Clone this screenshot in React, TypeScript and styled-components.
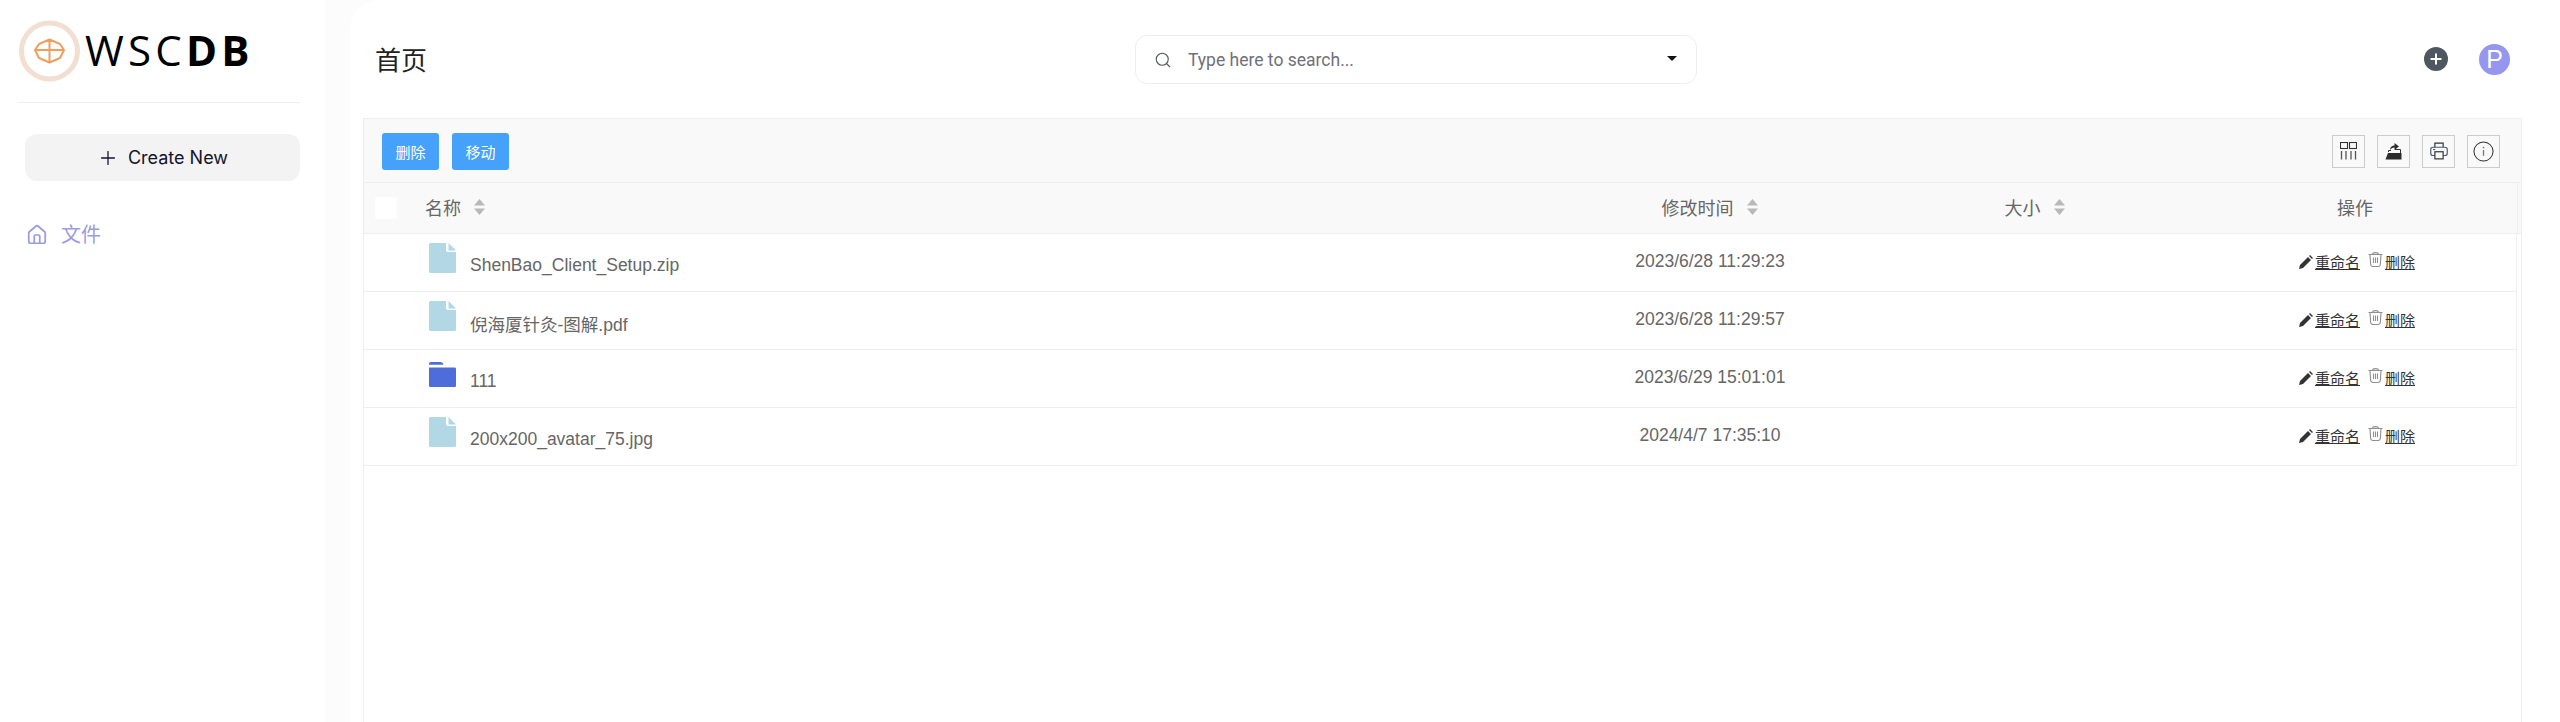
import React from 'react';
import styled, { createGlobalStyle } from 'styled-components';
import { Home, Plus, Search } from 'lucide-react';

const SIDEBAR_WIDTH = 325;
const ROW_COLUMNS = '50px 1129px 334px 316px 1fr';
const CJK_STACK = '"Liberation Sans", "Noto Sans CJK SC", sans-serif';

const GlobalStyle = createGlobalStyle`
    html, body {
        margin: 0;
        height: 100%;
        overflow: hidden;
        background: #fff;
        font-family: ${CJK_STACK};
    }
    * {
        box-sizing: border-box;
    }
`;

const Shell = styled.div`
    display: grid;
    grid-template-columns: ${SIDEBAR_WIDTH}px 1fr;
    height: 722px;
    overflow: hidden;
    background: #fcfcfc;
`;

const Sidebar = styled.aside`
    background: #fff;
    padding: 0 25px;
`;

const LogoRow = styled.div`
    display: flex;
    align-items: center;
    height: 103px;
    margin-left: -7px;
    padding-bottom: 1px;
    border-bottom: 1px solid #eeeeee;
    gap: 3px;
`;

const LogoText = styled.div`
    font-family: "Open Sans", sans-serif;
    font-size: 42px;
    line-height: 1;
    letter-spacing: 4.2px;
    color: #000;
    margin-top: -1px;

    b {
        font-weight: 700;
    }
`;

const CreateButton = styled.button`
    display: flex;
    align-items: center;
    justify-content: center;
    gap: 9px;
    width: 100%;
    height: 47px;
    margin-top: 31px;
    border: 0;
    border-radius: 12px;
    background: #f3f3f3;
    color: #14142b;
    font-family: Inter, sans-serif;
    font-size: 18px;
`;

const NavItem = styled.div`
    display: flex;
    align-items: center;
    gap: 13px;
    margin-top: 39px;
    padding-left: 1px;
    color: #9b9be2;
    font-size: 20px;
    line-height: 30px;
`;

const Main = styled.main`
    display: flex;
    flex-direction: column;
    min-width: 0;
    margin-left: 25px;
    padding: 0 38px 0 13px;
    background: #fff;
    border-top-left-radius: 30px;
`;

const TopBar = styled.header`
    display: grid;
    grid-template-columns: 760px 562px 1fr;
    align-items: center;
    height: 118px;
    padding: 0 12px;
`;

const PageTitle = styled.h1`
    margin: 4px 0 0;
    font-size: 26px;
    font-weight: 400;
    line-height: 36px;
    color: #222;
`;

const SearchBox = styled.div`
    display: flex;
    align-items: center;
    height: 49px;
    margin-top: 1px;
    padding: 0 19px 0 18px;
    border: 1px solid #eeeeee;
    border-radius: 12px;
    color: #70707a;
    font-family: Roboto, sans-serif;
    font-size: 17.500px;
    gap: 16px;

    svg {
        color: #555a63;
    }
`;

const SearchText = styled.span`
    flex: 1;
`;

const Caret = styled.span`
    width: 0;
    height: 0;
    margin: -2px 0 0;
    border-left: 5px solid transparent;
    border-right: 5px solid transparent;
    border-top: 5px solid #111;
`;

const TopActions = styled.div`
    display: flex;
    align-items: center;
    justify-content: flex-end;
    gap: 31px;
`;

const AddCircle = styled.span`
    display: flex;
    align-items: center;
    justify-content: center;
    width: 24px;
    height: 24px;
    border-radius: 50%;
    background: #4f5761;
    color: #fff;
`;

const Avatar = styled.span`
    display: flex;
    align-items: center;
    justify-content: center;
    width: 31px;
    height: 31px;
    border-radius: 50%;
    background: #9596ee;
    color: #fff;
    font-size: 25px;
`;

const Panel = styled.section`
    flex: 1;
    position: relative;
    border: 1px solid #eeeeee;
    border-bottom: 0;
    background: #fff;
`;

const Toolbar = styled.div`
    display: flex;
    align-items: center;
    justify-content: space-between;
    height: 64px;
    padding: 1px 21px 0 18px;
    background: #f9f9f9;
    border-bottom: 1px solid #eeeeee;
`;

const ButtonGroup = styled.div<{ $gap: number }>`
    display: flex;
    gap: ${(props) => props.$gap}px;
`;

const PrimaryButton = styled.button`
    width: 57px;
    height: 37px;
    padding: 0;
    border: 0;
    border-radius: 3px;
    background: #46a1fb;
    color: #fff;
    font-family: ${CJK_STACK};
    font-size: 15px;
`;

const ToolButton = styled.button`
    display: flex;
    align-items: center;
    justify-content: center;
    width: 33px;
    height: 33px;
    padding: 0;
    border: 1px solid #cccccc;
    background: transparent;
    color: #333;
`;

const HeaderRow = styled.div`
    display: grid;
    grid-template-columns: ${ROW_COLUMNS};
    align-items: center;
    height: 51px;
    padding-right: 4px;
    background: #f9f9f9;
    border-bottom: 1px solid #eeeeee;
    color: #666;
    font-size: 18px;
`;

const HeaderCell = styled.div<{ $center?: boolean }>`
    display: flex;
    align-items: center;
    justify-content: ${(props) => (props.$center ? 'center' : 'flex-start')};
    gap: 12px;
    height: 100%;
    padding-bottom: 2px;
`;

const HeaderLabel = styled.span`
    margin-left: 11px;
`;

const OperationHeader = styled(HeaderCell)`
    border-right: 1px solid #eeeeee;
    margin-right: -1px;
`;

const CheckCell = styled.div`
    display: flex;
    justify-content: center;
    padding-right: 7px;
`;

const CheckBox = styled.span`
    width: 22px;
    height: 22px;
    border-radius: 3px;
    background: #fff;
`;

const FileRow = styled.div`
    display: grid;
    grid-template-columns: ${ROW_COLUMNS};
    align-items: center;
    height: 58px;
    margin-right: 4px;
    border-right: 1px solid #eeeeee;
    border-bottom: 1px solid #eeeeee;
    color: #666;
    font-size: 16px;
`;

const NameCell = styled.div`
    grid-column: 2;
    display: flex;
    align-items: center;
    gap: 14px;
    padding-left: 15px;
`;

const IconSlot = styled.span`
    display: flex;
    justify-content: center;
    width: 27px;
    margin-top: -9px;
`;

const FileName = styled.span`
    margin-top: 6px;
    font-size: 17.500px;
`;

const DateCell = styled.div`
    text-align: center;
    margin-top: -3px;
    font-size: 17.500px;
`;

const ActionCell = styled.div`
    grid-column: 5;
    display: flex;
    align-items: center;
    justify-content: center;
    margin-top: -2px;
    padding-left: 5px;
    gap: 8px;
    color: #333;
    font-size: 15px;
`;

const ActionLink = styled.a`
    display: flex;
    align-items: center;
    gap: 2px;
    color: #333;

    span {
        text-decoration: underline;
    }
`;

const TrashGlyph = styled.svg`
    margin-top: -4px;
`;

const Sorter: React.FC = () => (
    <svg width="13" height="18" viewBox="0 0 13 18">
        <path d="M6.5 1 12 7.5H1zM1 10.5h11L6.5 17z" fill="#b9b9b9" />
    </svg>
);

const LogoMark: React.FC = () => (
    <svg width="64" height="64" viewBox="0 0 64 64" fill="none">
        <circle cx="31.500" cy="32" r="28" stroke="#f1dfd1" strokeWidth="5" />
        <path
            d="M31.500 20.500 42 25l4 6-4 8-10.500 4.500L21 39l-4-8 4-6zM31.500 20.500v23M17 31h29"
            stroke="#ee9f5f"
            strokeWidth="2"
            strokeLinejoin="round"
        />
    </svg>
);

const ColumnsIcon: React.FC = () => (
    <svg width="17" height="18" viewBox="0 0 17 18" fill="none" stroke="#333" strokeWidth="1.100">
        <rect x="0.500" y="0.500" width="7" height="6" />
        <rect x="9.500" y="0.500" width="7" height="6" />
        <path d="M1.500 9v8.500M6 9v8.500M11 9v8.500M15.500 9v8.500" stroke="#555" strokeWidth="1.300" />
    </svg>
);

const ExportIcon: React.FC = () => (
    <svg width="17" height="17" viewBox="0 0 17 17">
        <path d="M3.500 9V7.500h2.500M10 6.500h5.500V10" stroke="#333" fill="none" />
        <path d="M0.500 16.500 3 10h13.500v6.500z" fill="#2c2c2c" />
        <path d="M5 7c0-3 2-4.500 4.500-4.500V0L14 3.500 9.500 7V4.500C7.500 4.500 6 5.500 5 7z" fill="#2c2c2c" />
    </svg>
);

const PrintIcon: React.FC = () => (
    <svg width="18" height="18" viewBox="0 0 24 24" fill="none" stroke="#333" strokeWidth="1.600">
        <path d="M6.500 7V1.500h11V7" />
        <rect x="1" y="7" width="22" height="11" rx="3" stroke="#45607a" />
        <rect x="6.500" y="13" width="11" height="9.500" fill="#f9f9f9" />
        <path d="M4 10h3" stroke="#45607a" />
    </svg>
);

const InfoIcon: React.FC = () => (
    <svg width="21" height="21" viewBox="0 0 22 22" fill="none">
        <circle cx="11" cy="11" r="10" stroke="#333" strokeWidth="1.100" />
        <path d="M11 9.500v6" stroke="#777" strokeWidth="1.400" />
        <circle cx="11" cy="6.800" r="0.900" fill="#777" />
    </svg>
);

const FileIcon: React.FC = () => (
    <svg width="27" height="30" viewBox="0 0 27 30">
        <path d="M1.500 0H17v7a2 2 0 0 0 2 2h8v19.500a1.500 1.500 0 0 1-1.500 1.500h-24A1.500 1.500 0 0 1 0 28.500v-27A1.500 1.500 0 0 1 1.500 0z" fill="#b2d7e5" />
        <path d="M19.500 0 27 7.500h-7.500z" fill="#b2d7e5" />
    </svg>
);

const FolderIcon: React.FC = () => (
    <svg width="29" height="27" viewBox="0 0 29 27">
        <path d="M0 2a2 2 0 0 1 2-2h10c2 0 3 1 3.500 3H0z" fill="#4e6cda" />
        <path d="M0 6h27.500A1.500 1.500 0 0 1 29 7.500v18a1.500 1.500 0 0 1-1.500 1.500h-26A1.500 1.500 0 0 1 0 25.500z" fill="#4e6cda" />
    </svg>
);

const PencilIcon: React.FC = () => (
    <svg width="14" height="14" viewBox="0 0 14 14">
        <path d="M0 14l1-4 8-8 3 3-8 8zM10 1l1-1 3 3-1 1z" fill="#333" />
    </svg>
);

const TrashIcon: React.FC = () => (
    <TrashGlyph width="15" height="15" viewBox="0 0 15 15" fill="none" stroke="#8f8f8f" strokeWidth="1.100">
        <path d="M0.500 2.500h14M4.500 2.500C4.500 1 5.500.6 7.500.6s3 .4 3 1.900M2 2.500l.6 9.500c0 1.700 1 2.500 2.500 2.500h4.800c1.500 0 2.500-.8 2.500-2.500l.6-9.500" />
        <path d="M5.500 5.500v5.500M7.500 5.500v5.500M9.500 5.500v5.500" />
    </TrashGlyph>
);

type FileEntry = {
    name: string;
    modified: string;
    isFolder?: boolean;
};

const FILES: FileEntry[] = [
    { name: 'ShenBao_Client_Setup.zip', modified: '2023/6/28 11:29:23' },
    { name: '倪海厦针灸-图解.pdf', modified: '2023/6/28 11:29:57' },
    { name: '111', modified: '2023/6/29 15:01:01', isFolder: true },
    { name: '200x200_avatar_75.jpg', modified: '2024/4/7 17:35:10' }
];

const App: React.FC = () => {
    return (
        <Shell>
            <GlobalStyle />

            <Sidebar>
                <LogoRow>
                    <LogoMark />
                    <LogoText>WSC<b>DB</b></LogoText>
                </LogoRow>

                <CreateButton>
                    <Plus size={22} strokeWidth={1.4} />
                    Create New
                </CreateButton>

                <NavItem>
                    <Home size={22} strokeWidth={1.9} />
                    文件
                </NavItem>
            </Sidebar>

            <Main>
                <TopBar>
                    <PageTitle>首页</PageTitle>

                    <SearchBox>
                        <Search size={18} strokeWidth={1.5} />
                        <SearchText>Type here to search...</SearchText>
                        <Caret />
                    </SearchBox>

                    <TopActions>
                        <AddCircle>
                            <Plus size={16} strokeWidth={3} />
                        </AddCircle>
                        <Avatar>P</Avatar>
                    </TopActions>
                </TopBar>

                <Panel>
                    <Toolbar>
                        <ButtonGroup $gap={13}>
                            <PrimaryButton>删除</PrimaryButton>
                            <PrimaryButton>移动</PrimaryButton>
                        </ButtonGroup>

                        <ButtonGroup $gap={12}>
                            <ToolButton><ColumnsIcon /></ToolButton>
                            <ToolButton><ExportIcon /></ToolButton>
                            <ToolButton><PrintIcon /></ToolButton>
                            <ToolButton><InfoIcon /></ToolButton>
                        </ButtonGroup>
                    </Toolbar>

                    <HeaderRow>
                        <CheckCell><CheckBox /></CheckCell>
                        <HeaderCell>
                            <HeaderLabel>名称</HeaderLabel>
                            <Sorter />
                        </HeaderCell>
                        <HeaderCell $center>修改时间<Sorter /></HeaderCell>
                        <HeaderCell $center>大小<Sorter /></HeaderCell>
                        <OperationHeader $center>操作</OperationHeader>
                    </HeaderRow>

                    {FILES.map((file) => (
                        <FileRow key={file.name}>
                            <NameCell>
                                <IconSlot>
                                    {file.isFolder ? <FolderIcon /> : <FileIcon />}
                                </IconSlot>
                                <FileName>{file.name}</FileName>
                            </NameCell>
                            <DateCell>{file.modified}</DateCell>
                            <ActionCell>
                                <ActionLink><PencilIcon /><span>重命名</span></ActionLink>
                                <ActionLink><TrashIcon /><span>删除</span></ActionLink>
                            </ActionCell>
                        </FileRow>
                    ))}
                </Panel>
            </Main>
        </Shell>
    );
};

export default App;
